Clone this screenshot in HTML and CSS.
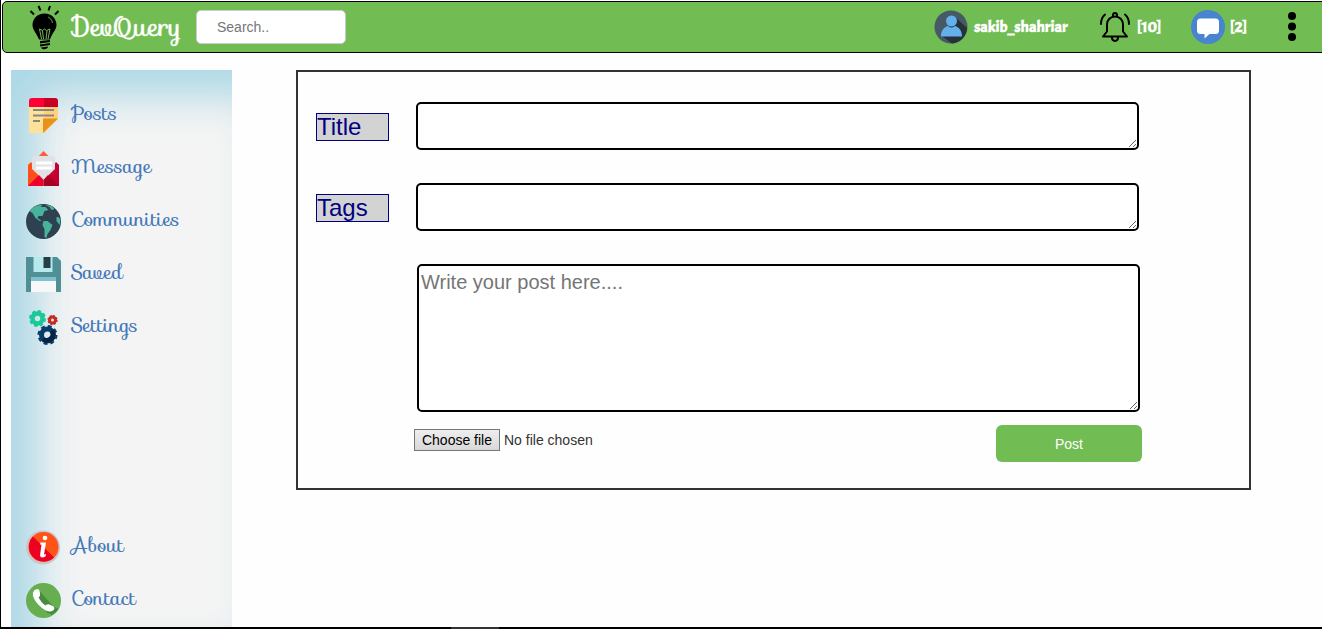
FILE: index.html
```html
<!DOCTYPE html>
<html lang="en">
<head>
<meta charset="utf-8">
<title>DevQuery</title>
<link rel="stylesheet" href="styles.css">
</head>
<body>
<header class="navbar">
  <svg class="bulb" viewBox="0 0 32 46">
    <g stroke="#000" stroke-width="2"><path d="M1.500 7l3.500 3.500M9.500 2l2 4.500M21 2l-1.500 4.500M29.500 7l-3.500 3.500"/></g>
    <path fill="#000" d="M15.500 9.500C8 9.500 3.500 15 3.500 21c0 5 4 8 6.500 14.500h11C23 29 27.500 26 27.500 21c0-6-4.500-11.500-12-11.500zM11 37l10-1v2l-10 1.500zM11 40.500l10-1.500v2l-10 1.500zM12 43.500l7-1c0 3-6 4-7 1z"/>
    <path fill="none" stroke="#72bc54" d="M12.500 35l-2-10 3 1.500 2-1.500 2 1.500 3.500-1.500-2 10M13.500 27l1 8M18 27l-1 8"/>
    <path fill="none" stroke="#4d7c39" stroke-width="1.300" d="M19 13q4 2 4.500 6"/>
  </svg>
  <a class="brand">DevQuery</a>
  <input class="search" type="text" placeholder="Search..">
  <nav class="account">
    <svg class="avatar" viewBox="0 0 34 34">
      <circle cx="17" cy="17" r="16.500" fill="#455a64"/>
      <path fill="#263238" d="M21 7l12 11A16.500 16.500 0 0 1 18 33.500L8 26z"/>
      <circle cx="17.500" cy="11" r="5.500" fill="#64b0ed"/>
      <path fill="#64b0ed" d="M7 26.500c0-6 3-9.500 7-10.500q3.500 3 7 0c4 1 7 4.500 7 10.500z"/>
    </svg>
    <span class="name">sakib_shahriar</span>
    <svg class="bell" viewBox="0 0 32 32" fill="none" stroke="#000" stroke-width="2" stroke-linecap="round" stroke-linejoin="round">
      <path d="M3 25.500h24l-4-5v-7c0-4.500-3.500-8-8-8s-8 3.500-8 8v7zM12 26.500c0 4.500 6 4.500 6 0M13 5c-1-4 5-4 4 0M1 13c0-4 1.500-7.500 4-9.500M29 13c0-4-1.500-7.500-4-9.500"/>
    </svg>
    <span class="alerts">[10]</span>
    <svg class="chat" viewBox="0 0 34 34">
      <circle cx="17" cy="17" r="17" fill="#4884cf"/>
      <path fill="#fff" d="M9.500 8.500h15q3.500 0 3.500 3.500v8.500q0 3.500-3.500 3.500h-6l-5 4.500V24h-4Q6 24 6 20.500V12q0-3.500 3.500-3.500z"/>
    </svg>
    <span class="unread">[2]</span>
    <svg class="dots" viewBox="0 0 8 30"><circle cx="4" cy="4" r="4"/><circle cx="4" cy="14.500" r="4"/><circle cx="4" cy="25" r="4"/></svg>
  </nav>
</header>
<main class="page">
  <aside class="sidebar">
    <a class="link posts">
      <svg class="icon" viewBox="0 0 36 36">
        <path fill="#ffe29a" d="M3 9h29v13L18 36H5q-2 0-2-2z"/><path fill="#ffd17a" d="M18 9h14v13L18 36z"/>
        <path fill="#ff0036" d="M3 10V4q0-3 3-3h12v9z"/><path fill="#c70024" d="M18 1h11q3 0 3 3v6H18z"/>
        <path stroke="#8b8582" stroke-width="2" d="M7 13h21M7 18.500h21M7 24h7"/>
        <path fill="#e8921b" d="M17 21.500h15L17 36z"/>
      </svg><span class="text">Posts</span></a>
    <a class="link message">
      <svg class="icon" viewBox="0 0 36 36">
        <path fill="#ff5c35" d="M12 7l5.500-6 6 6z"/>
        <path fill="#ff4f19" d="M2 15l3-3 13 17-5 7H2z"/><path fill="#c50030" d="M33 15l-3-3-12 17 5 7h10z"/>
        <path fill="#e1e2e5" d="M6 8q0-2 2-2h19q2 0 2 2v11L17.500 30 6 19z"/>
        <path stroke="#fff" stroke-width="3" d="M10 13h16M10 18h16"/>
        <path fill="#ed002e" d="M2 36l11-11 4.500 5v6z"/><path fill="#a70020" d="M33 36L22 25l-4.500 5v6z"/>
      </svg><span class="text">Message</span></a>
    <a class="link communities">
      <svg class="icon" viewBox="0.5 0 36 36">
        <circle cx="18" cy="18.500" r="17.500" fill="#2d4150"/>
        <path fill="#48b29b" d="M4 8Q9 1 17 2l-2 2 5 0 3 3-4 1-2 5-4 0-1 2 4 3-2 0-4-3-3-5zM20 2q7 0 9 4l-3 1-2-3zM18 18l4 0 5 4-2 5-3 4-1 4-2-1 0-8-2-4zM33 14l2 3-1 5-3-4 0-4z"/>
      </svg><span class="text">Communities</span></a>
    <a class="link saved">
      <svg class="icon" viewBox="0.5 0 36 36">
        <path fill="#508f96" d="M.5 1h31l4 4v31H.5z"/><path fill="#b5e9ed" d="M8 1h19v15H8z"/><path fill="#223f45" d="M18 1h7v11h-7z"/>
        <path fill="#7bc1cf" d="M5.500 21h25v4h-25z"/><path fill="#f7f7f7" d="M5.500 25h25v11h-25z"/>
      </svg><span class="text">Saved</span></a>
    <a class="link settings">
      <svg class="icon" viewBox="0.5 0 36 36" fill="none">
        <circle cx="12" cy="9.500" r="5" stroke="#19c998" stroke-width="4.500"/><circle cx="12" cy="9.500" r="7.500" stroke="#19c998" stroke-width="2" stroke-dasharray="3.400 2.490"/>
        <circle cx="27" cy="11" r="3" stroke="#c52920" stroke-width="3"/><circle cx="27" cy="11" r="4.500" stroke="#c52920" stroke-width="1.300" stroke-dasharray="2 1.534"/>
        <circle cx="22" cy="26" r="6" stroke="#073b68" stroke-width="5"/><circle cx="22" cy="26" r="9" stroke="#073b68" stroke-width="2" stroke-dasharray="4 3.069"/>
        <path stroke="#052344" stroke-width="5" d="M26.200 21.800a6 6 0 0 1-8.400 8.400"/>
      </svg><span class="text">Settings</span></a>
    <a class="link about">
      <svg class="icon" viewBox="0 0 36 36">
        <circle cx="17" cy="18.500" r="17" fill="#c9c5ca"/><circle cx="17.500" cy="18" r="15" fill="#ff5318"/>
        <path fill="#ed0021" d="M6.900 7.400a15 15 0 0 0 21.200 21.200z"/>
        <circle cx="19" cy="9" r="2.300" fill="#fff"/><path fill="#fff" d="M14.500 13.500h5.500l-2 12 2-.5-.5 2.500q-5 2.500-5.500-1l1.500-11h-1.500z"/>
      </svg><span class="text">About</span></a>
    <a class="link contact">
      <svg class="icon" viewBox="0.5 0 36 36">
        <circle cx="18" cy="18.500" r="17.500" fill="#67ae50"/>
        <path fill="#498b3c" d="M14 9l16 18-4 5-4-1L9 15zM29 25l4 2a17.500 17.500 0 0 1-7 6l-5-5z"/>
        <path fill="#fff" d="M9 8l3-1q2 0 2.500 4t-1.500 4q2 5 7 8.500 2-2 4-1l4 2q2 2-.5 4-4 3-11-2.500T7.500 14q-.5-4 1.500-6z"/>
      </svg><span class="text">Contact</span></a>
  </aside>
  <form class="post-form">
    <div class="row"><label class="label">Title</label><textarea class="field"></textarea></div>
    <div class="row"><label class="label">Tags</label><textarea class="field"></textarea></div>
    <textarea class="field body-field" placeholder="Write your post here...."></textarea>
    <div class="actions">
      <button class="choose" type="button">Choose file</button>
      <span class="filename">No file chosen</span>
      <button class="submit" type="button">Post</button>
    </div>
  </form>
</main>
<footer class="baseline"><i class="handle"></i></footer>
</body>
</html>
```
FILE: styles.css
```css
* { box-sizing: border-box; }
body {
  margin: 0;
  height: 629px;
  display: flex;
  flex-direction: column;
  overflow: hidden;
  background: #fefefe;
  border-left: 1px solid #000;
  font-family: "Liberation Sans", Arial, sans-serif;
}
svg { display: block; flex: none; }
.navbar {
  flex: none;
  height: 52px;
  margin: 1px -8px 0 1px;
  padding-left: 26px;
  display: flex;
  align-items: flex-start;
  background: #72bc54;
  border: 1px solid #000;
  border-radius: 5px;
}
.bulb { width: 32px; height: 46px; margin-top: 2px; }
.brand {
  flex: none;
  width: 127px;
  padding: 10px 0 0 11px;
  font: 26px/30px "Sofia", "Liberation Serif", serif;
  color: #fff;
  -webkit-text-stroke: .4px #fff;
}
.search {
  flex: none;
  width: 150px;
  height: 34px;
  margin: 8px 0 0 8px;
  padding: 0 20px;
  border: 1px solid #ccc;
  border-radius: 5px;
  background: #fff;
  font: 14px "Liberation Sans", Arial, sans-serif;
}
.search::placeholder, .field::placeholder { color: #757575; opacity: 1; }
.account {
  flex: none;
  display: flex;
  align-items: center;
  height: 50px;
  margin-left: 588px;
  color: #fff;
  font: bold 16px "Acme", "Lato", sans-serif;
}
.account span { flex: none; }
.avatar { width: 34px; height: 34px; }
.name { width: 132px; padding-left: 6px; }
.bell { width: 32px; height: 32px; }
.alerts { width: 59px; padding-left: 5px; }
.chat { width: 34px; height: 34px; }
.unread { width: 63px; padding-left: 5px; }
.dots { width: 8px; height: 30px; }
.page {
  flex: 1;
  display: flex;
  align-items: flex-start;
  padding: 17px 0 0 10px;
}
.sidebar {
  width: 221px;
  height: 557px;
  padding: 27px 0 0 15px;
  background: #f4f4f4;
  box-shadow: inset 28px 26px 42px lightblue;
}
.link {
  display: flex;
  height: 36px;
  margin-bottom: 17px;
  color: #4479b8;
  font: 20px/32px "Sofia", "Liberation Serif", serif;
}
.icon { width: 36px; height: 36px; }
.text { padding-left: 9px; }
.about { margin-top: 184px; }
.post-form {
  width: 955px;
  height: 420px;
  margin-left: 64px;
  padding: 30px 0 0 18px;
  border: 2px solid #333;
}
.row { display: flex; height: 48px; margin-bottom: 33px; }
.label {
  width: 73px;
  height: 28px;
  margin: 11px 27px 0 0;
  border: 1px solid navy;
  background: lightgray;
  color: navy;
  font-size: 24px;
  line-height: 26px;
}
.field {
  display: block;
  width: 723px;
  height: 48px;
  padding: 2px;
  border: 2px solid #000;
  border-radius: 5px;
  background: #fff;
  font: 20px "Liberation Sans", Arial, sans-serif;
}
.body-field { height: 148px; margin-left: 101px; padding: 5px 2px; }
.actions {
  display: flex;
  align-items: flex-start;
  margin: 13px 0 0 98px;
  font-size: 14px;
}
.choose {
  width: 86px;
  height: 22px;
  margin-top: 4px;
  padding: 0;
  border: 1px solid #767676;
  background: linear-gradient(#eee, #d8d8d8);
  color: #000;
  font: 14px "Liberation Sans", Arial, sans-serif;
}
.filename { width: 496px; padding: 7px 0 0 4px; color: #333; }
.submit {
  width: 146px;
  height: 37px;
  border: 0;
  border-radius: 6px;
  background: #72bc54;
  color: #fff;
  font: 14px "Liberation Sans", Arial, sans-serif;
}
.baseline { flex: none; height: 2px; background: #000; }
.handle { display: block; width: 48px; height: 2px; margin-left: 450px; background: #333; }
```
